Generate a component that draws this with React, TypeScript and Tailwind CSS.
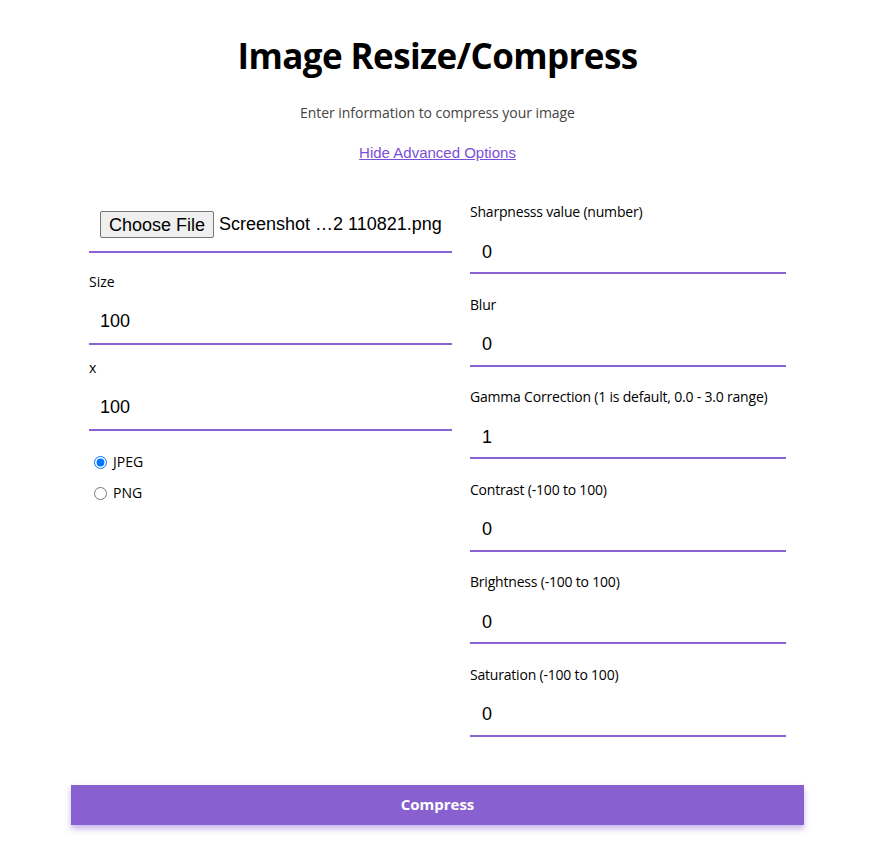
import React from "react";

const sans = "font-['Open_Sans','Noto_Sans',sans-serif]";

function RightField({ label, value }: { label: string; value: string }) {
  return (
    <div className="mb-[20.6px] flex flex-col">
      <label className={`h-5 text-[14px] leading-5 text-black ${sans} tracking-[-0.2px]`}>{label}</label>
      <input
        defaultValue={value}
        className="mt-[6px] h-[46px] w-full border-b-2 border-[#8a63d2] pl-[12px] pt-[4px] font-['Liberation_Sans',Arial,sans-serif] text-[18px] text-black outline-none"
      />
    </div>
  );
}

function LeftField({ label, value }: { label: string; value: string }) {
  return (
    <div className="mt-[13px] flex flex-col">
      <label className={`h-5 text-[14px] leading-5 text-black ${sans}`}>{label}</label>
      <input
        defaultValue={value}
        className="mt-[6px] h-[47px] w-full border-b-2 border-[#8a63d2] pl-[11px] pt-[2px] font-['Liberation_Sans',Arial,sans-serif] text-[18px] text-black outline-none"
      />
    </div>
  );
}

export default function App() {
  return (
    <div className="min-h-[865px] w-[875px] bg-white">
      <h1 className={`pt-[33px] text-center text-[35px] font-bold leading-[46px] text-black ${sans} tracking-[-0.6px]`}>
        Image Resize/Compress
      </h1>
      <p className={`mt-[24px] text-center text-[14px] leading-5 text-[#444] ${sans} tracking-[-0.05px]`}>
        Enter information to compress your image
      </p>
      <div className="mt-[17px] text-center">
        <a href="#" className="font-['Liberation_Sans',Arial,sans-serif] text-[15px] leading-5 text-[#7a4fd8] underline">
          Hide Advanced Options
        </a>
      </div>
      <div className="mt-[34px] flex gap-[18px] pl-[89px]">
        <div className="flex w-[363px] flex-col">
          <div className="flex h-[55px] items-center border-b-2 border-[#8a63d2] pl-[11px]">
            <button className="h-[27px] rounded-[2px] border border-[#767676] bg-[#efefef] px-[8px] font-['Liberation_Sans',Arial,sans-serif] text-[18px] leading-none text-black">
              Choose File
            </button>
            <span className="ml-[5px] font-['Liberation_Sans',Arial,sans-serif] text-[18px] text-black">
              Screenshot …2 110821.png
            </span>
          </div>
          <div className="mt-[6px]">
            <LeftField label="Size" value="100" />
          </div>
          <LeftField label="x" value="100" />
          <div className={`mt-[21px] flex flex-col gap-[11px] pl-[5px] text-[14px] leading-5 text-black ${sans}`}>
            <label className="flex items-center gap-[6px]">
              <input type="radio" name="fmt" defaultChecked className="m-0 h-[13px] w-[13px]" />
              <span>JPEG</span>
            </label>
            <label className="flex items-center gap-[6px]">
              <input type="radio" name="fmt" className="m-0 h-[13px] w-[13px]" />
              <span>PNG</span>
            </label>
          </div>
        </div>
        <div className="flex w-[316px] flex-col pt-[4px]">
          <RightField label="Sharpnesss value (number)" value="0" />
          <RightField label="Blur" value="0" />
          <RightField label="Gamma Correction (1 is default, 0.0 - 3.0 range)" value="1" />
          <RightField label="Contrast (-100 to 100)" value="0" />
          <RightField label="Brightness (-100 to 100)" value="0" />
          <RightField label="Saturation (-100 to 100)" value="0" />
        </div>
      </div>
      <div className="mt-[27px] pl-[71px]">
        <button
          className={`h-10 w-[733px] bg-[#8860d0] text-[15px] font-bold text-white shadow-[0_4px_6px_rgba(136,96,208,0.45)] ${sans}`}
        >
          Compress
        </button>
      </div>
    </div>
  );
}
